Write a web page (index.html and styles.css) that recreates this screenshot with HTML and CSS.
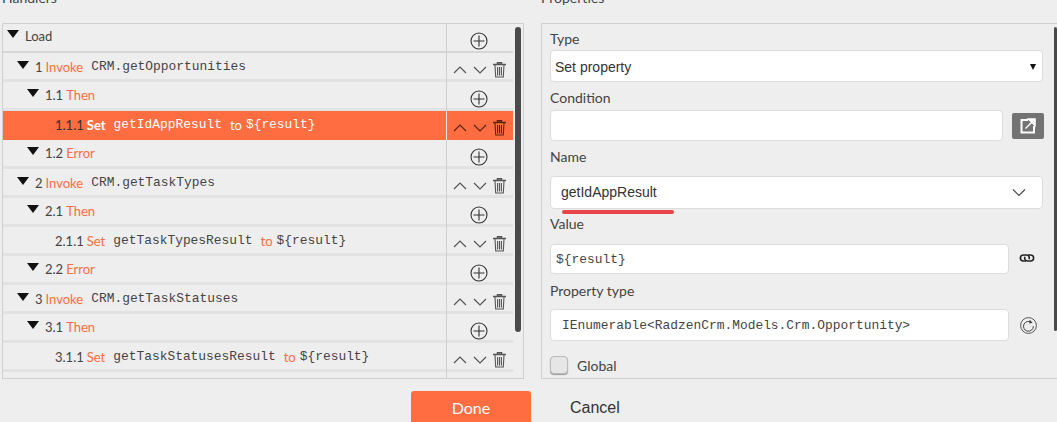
FILE: index.html
```html
<!DOCTYPE html>
<html lang="en">
<head>
<meta charset="utf-8">
<title>Handlers</title>
<link rel="stylesheet" href="styles.css">
</head>
<body>
<svg class="defs" width="0" height="0" aria-hidden="true">
  <symbol id="add" viewBox="0 0 18 18"><circle cx="9" cy="9" r="8" fill="none" stroke="currentColor" stroke-width="1.1"/><path d="M3.5 9h11M9 3.5v11" fill="none" stroke="currentColor" stroke-width="1.1"/></symbol>
  <symbol id="up" viewBox="0 0 14 10"><path d="M1 8l6-6 6 6" fill="none" stroke="currentColor" stroke-width="1.2"/></symbol>
  <symbol id="down" viewBox="0 0 14 10"><path d="M1 2l6 6 6-6" fill="none" stroke="currentColor" stroke-width="1.2"/></symbol>
  <symbol id="trash" viewBox="0 0 13 16"><path d="M0 2.600h13M4.500 2.500V.8h4v1.700" fill="none" stroke="currentColor" stroke-width="1.500"/><path d="M2 3l.7 12h7.600L11 3M4.600 5v8.500M6.500 5v8.500M8.400 5v8.500" fill="none" stroke="currentColor" stroke-width="1.100"/></symbol>
</svg>

<main class="columns">
  <section class="column">
    <h2 class="title">Handlers</h2>
    <div class="panel tree">
      <div class="row row-top"><div class="cell lv0"><i class="tri"></i><span>Load</span></div><div class="acts acts-add"><svg class="i-add"><use href="#add"/></svg></div></div>
      <div class="row"><div class="cell lv1"><i class="tri"></i><span>1</span><b>Invoke</b><code>CRM.getOpportunities</code></div><div class="acts"><svg class="i-ch"><use href="#up"/></svg><svg class="i-ch"><use href="#down"/></svg><svg class="i-tr"><use href="#trash"/></svg></div></div>
      <div class="row"><div class="cell lv2"><i class="tri"></i><span>1.1</span><b>Then</b></div><div class="acts acts-add"><svg class="i-add"><use href="#add"/></svg></div></div>
      <div class="row selected"><div class="cell lv3"><span>1.1.1</span><b>Set</b><code>getIdAppResult</code><b>to</b><code class="val">${result}</code></div><div class="acts"><svg class="i-ch"><use href="#up"/></svg><svg class="i-ch"><use href="#down"/></svg><svg class="i-tr"><use href="#trash"/></svg></div></div>
      <div class="row"><div class="cell lv2"><i class="tri"></i><span>1.2</span><b>Error</b></div><div class="acts acts-add"><svg class="i-add"><use href="#add"/></svg></div></div>
      <div class="row"><div class="cell lv1"><i class="tri"></i><span>2</span><b>Invoke</b><code>CRM.getTaskTypes</code></div><div class="acts"><svg class="i-ch"><use href="#up"/></svg><svg class="i-ch"><use href="#down"/></svg><svg class="i-tr"><use href="#trash"/></svg></div></div>
      <div class="row"><div class="cell lv2"><i class="tri"></i><span>2.1</span><b>Then</b></div><div class="acts acts-add"><svg class="i-add"><use href="#add"/></svg></div></div>
      <div class="row"><div class="cell lv3"><span>2.1.1</span><b>Set</b><code>getTaskTypesResult</code><b>to</b><code class="val">${result}</code></div><div class="acts"><svg class="i-ch"><use href="#up"/></svg><svg class="i-ch"><use href="#down"/></svg><svg class="i-tr"><use href="#trash"/></svg></div></div>
      <div class="row"><div class="cell lv2"><i class="tri"></i><span>2.2</span><b>Error</b></div><div class="acts acts-add"><svg class="i-add"><use href="#add"/></svg></div></div>
      <div class="row"><div class="cell lv1"><i class="tri"></i><span>3</span><b>Invoke</b><code>CRM.getTaskStatuses</code></div><div class="acts"><svg class="i-ch"><use href="#up"/></svg><svg class="i-ch"><use href="#down"/></svg><svg class="i-tr"><use href="#trash"/></svg></div></div>
      <div class="row"><div class="cell lv2"><i class="tri"></i><span>3.1</span><b>Then</b></div><div class="acts acts-add"><svg class="i-add"><use href="#add"/></svg></div></div>
      <div class="row"><div class="cell lv3"><span>3.1.1</span><b>Set</b><code>getTaskStatusesResult</code><b>to</b><code class="val">${result}</code></div><div class="acts"><svg class="i-ch"><use href="#up"/></svg><svg class="i-ch"><use href="#down"/></svg><svg class="i-tr"><use href="#trash"/></svg></div></div>
      <div class="row"><div class="cell"></div><div class="acts"></div></div>
      <div class="thumb thumb-tree"></div>
    </div>
  </section>

  <section class="column column-right">
    <h2 class="title">Properties</h2>
    <div class="panel form">
      <div class="label label-first">Type</div>
      <div class="box box-type"><span>Set property</span><i class="caret"></i></div>

      <div class="label label-cond">Condition</div>
      <div class="line line-cond">
        <div class="box box-cond"></div>
        <div class="open-btn">
          <svg width="16" height="16" viewBox="0 0 16 16"><path d="M8 2H1.500v12.500H14V8" fill="none" stroke="#fff" stroke-width="2"/><path d="M5.500 10.500L13 3M8.500 1h6.500v6.500z" fill="#fff" stroke="#fff" stroke-width="1.500"/></svg>
        </div>
      </div>

      <div class="label label-name">Name</div>
      <div class="box box-name"><span>getIdAppResult</span>
        <svg class="name-ch" width="14" height="9" viewBox="0 0 14 9"><path d="M1 1.500l6 6 6-6" fill="none" stroke="#444" stroke-width="1.100"/></svg>
        <div class="mark"></div>
      </div>

      <div class="label label-value">Value</div>
      <div class="line">
        <div class="box box-value"><code>${result}</code></div>
        <svg class="side side-link" width="16" height="10" viewBox="0 0 16 10"><path d="M7 8H4.400a3 3 0 0 1 0-6H7.500a3 3 0 0 1 2.600 4.200" fill="none" stroke="#222" stroke-width="1.600"/><path d="M9 2h2.600a3 3 0 0 1 0 6H8.500a3 3 0 0 1-2.600-4.200" fill="none" stroke="#222" stroke-width="1.600"/></svg>
      </div>

      <div class="label label-ptype">Property type</div>
      <div class="line">
        <div class="box box-ptype"><code>IEnumerable&lt;RadzenCrm.Models.Crm.Opportunity&gt;</code></div>
        <svg class="side side-refresh" width="17" height="17" viewBox="0 0 17 17"><circle cx="8.500" cy="8.500" r="7.900" fill="none" stroke="#444" stroke-width=".9"/><path d="M11.800 5.800A4.900 4.900 0 1 0 13.300 9.200" fill="none" stroke="#444" stroke-width="1"/><path d="M9.800 2.800l2.800 3-3.600.6z" fill="#444"/></svg>
      </div>

      <div class="check-line"><i class="check"></i><span>Global</span></div>
      <div class="thumb thumb-form"></div>
    </div>
  </section>
</main>

<footer class="footer">
  <div class="btn-done">Done</div>
  <div class="btn-cancel">Cancel</div>
</footer>
</body>
</html>
```
FILE: styles.css
```css
* { box-sizing: border-box; }
html, body { margin: 0; height: 422px; overflow: hidden; }
body { background: #eeeeee; color: #444; font-family: Lato, sans-serif; font-size: 13px; }
.defs { position: absolute; }

.columns { display: flex; gap: 17px; margin-top: -12px; padding-left: 2px; width: 1080px; }
.column { width: 522px; flex: none; }
.column-right { width: 520px; }
.title { margin: 0 0 15px; font-weight: 400; font-size: 14px; line-height: 20px; color: #444; }

.panel { position: relative; height: 356px; border: 1px solid #d0d0d0; overflow: hidden; }

.row { display: flex; height: 29px; width: 510px; border-bottom: 3px solid #e2e2e2; }
.row-top { border-bottom: 2px solid #d6d6d6; }
.cell { flex: none; width: 443px; display: flex; align-items: center; white-space: nowrap; padding-top: 1px; }
.cell span { margin-right: 3px; color: #444; }
.cell b { font-weight: 400; color: #ff6d41; margin-right: 8px; }
.cell code { font-family: "Liberation Mono", monospace; font-size: 12.900px; color: #444; margin-right: 8px; }
.cell code.val { margin-left: -4px; }
.lv0 { padding: 0 0 3px 4px; }
.lv1 { padding-left: 14px; }
.lv2 { padding-top: 0; padding-left: 24px; }
.lv3 { padding-left: 52px; }
.tri { width: 0; height: 0; margin: -4px 6px 0 0; border-left: 6.500px solid transparent; border-right: 6.500px solid transparent; border-top: 8px solid #111; }

.acts { flex: 1; display: flex; align-items: center; gap: 6px; padding: 5px 0 0 6px; border-left: 1px solid #cfcfcf; margin-bottom: -3px; color: #555; }
.acts-add { justify-content: center; padding: 4px 2px 0 0; color: #333; }
.i-add { width: 18px; height: 18px; }
.i-ch { width: 14px; height: 10px; flex: none; }
.i-tr { width: 13px; height: 16px; flex: none; }

.selected { background: #ff6d41; border-bottom-color: #ff6d41; }
.selected .cell b, .selected .cell code { color: #fff; }
.selected .cell b { font-weight: 700; }
.selected .cell b:nth-of-type(2) { font-weight: 400; }
.selected .cell span { color: #333; }
.selected .acts { color: #5c2412; border-left-color: #e8e8e8; }

.thumb { position: absolute; background: #4a4a4a; border-radius: 3px; width: 6px; }
.thumb-tree { top: 3px; right: 2px; height: 305px; }
.thumb-form { top: 3px; right: 3px; height: 304px; width: 3px; }

.form { padding: 5px 8px; }
.label { font-size: 14px; line-height: 20px; color: #444; }
.label-cond { margin-top: 6px; }
.label-name { margin-top: 6px; }
.label-value { margin-top: 5px; }
.label-ptype { margin-top: 7px; }
.box { position: relative; display: flex; align-items: center; background: #fff; border: 1px solid #dcdcdc; border-radius: 4px; font-family: "Liberation Sans", sans-serif; font-size: 14px; color: #333; }
.box code { font-family: "Liberation Mono", monospace; font-size: 12.900px; color: #444; }
.box-type { width: 493px; height: 32px; margin-top: 1px; padding: 2px 2px 0 4px; justify-content: space-between; }
.caret { margin-right: 4px; width: 0; height: 0; border-left: 3px solid transparent; border-right: 3px solid transparent; border-top: 6px solid #111; }
.line { display: flex; align-items: center; }
.line-cond { margin-top: 2px; }
.box-cond { width: 453px; height: 31px; }
.open-btn { margin-left: 9px; width: 32px; height: 26px; border-radius: 2px; background: #737373; display: flex; align-items: center; justify-content: center; }
.box-name { width: 493px; height: 33px; margin-top: 9px; padding: 0 16px 1px 10px; justify-content: space-between; }
.mark { position: absolute; left: 11px; top: 33px; width: 112px; height: 4px; border-radius: 2px; background: #e8454b; }
.box-value { width: 459px; height: 30px; margin-top: 10px; padding-left: 5px; }
.box-ptype { width: 459px; height: 32px; margin-top: 8px; padding-left: 11px; }
.side { flex: none; margin: 8px 0 0 10px; }
.side-refresh { margin-left: 11px; }
.check-line { display: flex; align-items: center; gap: 9px; margin-top: 15px; font-size: 14px; }
.check { width: 18px; height: 18px; border: 1px solid #bbb; border-radius: 4px; background: #e6e6e6; box-shadow: 0 1px 1px #999; }

.footer { display: flex; align-items: flex-start; padding: 12px 0 0 411px; }
.btn-done { width: 120px; height: 40px; background: #ff6d41; color: #fff; border-radius: 3px 3px 0 0; font-size: 16px; line-height: 34px; text-align: center; }
.btn-cancel { margin-left: 39px; font-family: "Liberation Sans", sans-serif; font-size: 16px; line-height: 34px; color: #333; }
```
